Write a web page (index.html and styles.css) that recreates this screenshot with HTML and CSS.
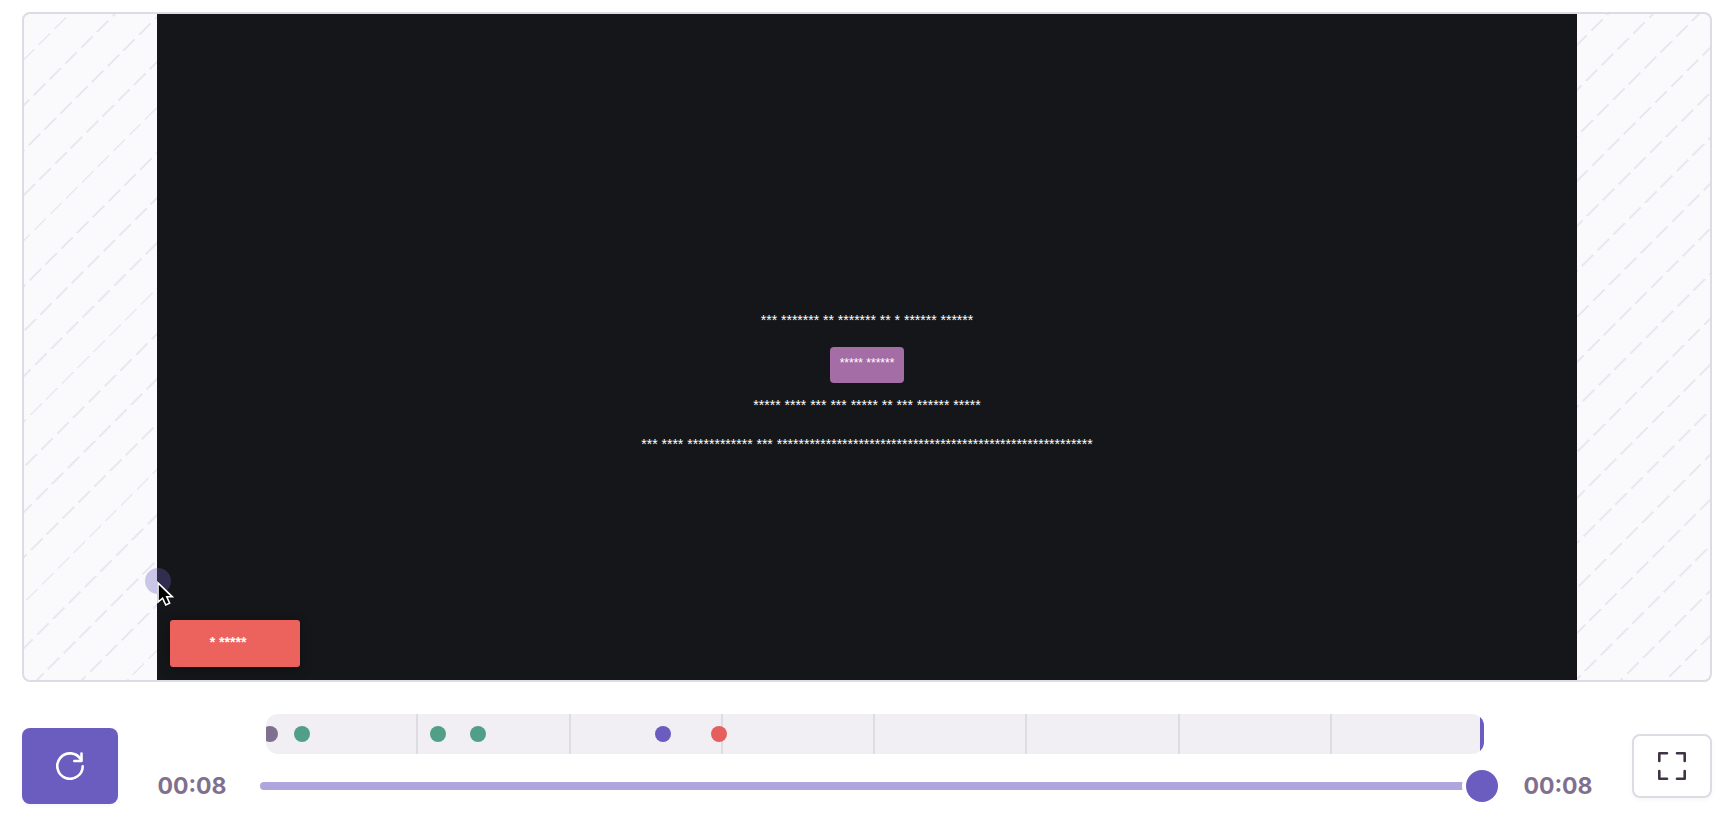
FILE: index.html
```html
<!DOCTYPE html>
<html lang="en">
<head>
<meta charset="utf-8">
<meta name="viewport" content="width=device-width, initial-scale=1">
<title>Session replay</title>
<link rel="stylesheet" href="styles.css">
</head>
<body>
<main class="replay">
  <section class="player" aria-label="Replay">
    <div class="stage">
      <div class="stage-content">
        <p class="line">*** ******* ** ******* ** * ****** ******</p>
        <button type="button" class="stage-button">***** ******</button>
        <p class="line line-follow">***** **** *** *** ***** ** *** ****** *****</p>
        <p class="line">*** **** ************ *** **********************************************************</p>
      </div>
      <button type="button" class="toast">* *****</button>
      <div class="pointer">
        <svg class="pointer-arrow" viewBox="0 0 18 26" aria-hidden="true">
          <path d="M2 2V21L6.600 17.200L9.800 24L13.600 22.200L10.800 15.800H16.300Z" fill="#000" stroke="#fff" stroke-width="1.600"/>
        </svg>
      </div>
    </div>
  </section>

  <div class="controls">
    <button type="button" class="restart" aria-label="Restart replay">
      <svg class="icon" viewBox="0 0 28 28" fill="none" stroke="currentColor" stroke-width="2.600" stroke-linecap="round" stroke-linejoin="round" aria-hidden="true">
        <path d="M26.700 14.200A12.700 12.700 0 1 1 25 7.700"/>
        <path d="M25.500 1.500V9H18.300"/>
      </svg>
    </button>
    <div class="scrubber">
      <div class="timeline">
        <span class="tick"></span><span class="tick"></span><span class="tick"></span><span class="tick"></span><span class="tick"></span><span class="tick"></span><span class="tick"></span><span class="tick"></span>
        <span class="event event-gray" style="left:0.33%"></span>
        <span class="event event-green" style="left:2.96%"></span>
        <span class="event event-green" style="left:14.12%"></span>
        <span class="event event-green" style="left:17.41%"></span>
        <span class="event event-purple" style="left:32.6%"></span>
        <span class="event event-red" style="left:37.2%"></span>
        <span class="playhead"></span>
      </div>
      <time class="time">00:08</time>
      <input class="seek" type="range" min="0" max="8" value="8" aria-label="Seek">
      <time class="time">00:08</time>
    </div>
    <button type="button" class="fullscreen" aria-label="Fullscreen">
      <svg class="icon" viewBox="0 0 28 28" fill="none" stroke="currentColor" stroke-width="2.600" stroke-linecap="round" stroke-linejoin="round" aria-hidden="true">
        <path d="M1.300 9V1.300H9M19 1.300H26.700V9M26.700 19V26.700H19M9 26.700H1.300V19"/>
      </svg>
    </button>
  </div>
</main>
</body>
</html>
```

FILE: styles.css
```css
* {
  box-sizing: border-box;
}

body {
  margin: 0;
  background: #fff;
  font-family: Inter, "Liberation Sans", sans-serif;
}

button {
  border: 0;
  cursor: pointer;
}

.replay {
  display: flex;
  flex-direction: column;
  gap: 32px;
  min-height: 100vh;
  padding: 12px 16px 3px 22px;
}

.player {
  flex: 1;
  display: flex;
  justify-content: center;
  overflow: hidden;
  border: 2px solid #dddbe3;
  border-radius: 8px;
  background-color: #fafafc;
  background-image:
    repeating-linear-gradient(-145deg, transparent, transparent 16px, #fafafc 16px, #fafafc 22px),
    repeating-linear-gradient(-45deg, transparent, transparent 30px, #ebe9f0 30px, #ebe9f0 32px);
}

.stage {
  position: relative;
  width: 84.25%;
  background: #151619;
  font-family: "Liberation Sans", Arial, sans-serif;
  color: #fff;
}

.stage-content {
  display: flex;
  flex-direction: column;
  align-items: center;
  padding-top: 298px;
}

.line {
  margin: 0 0 23px;
  font-size: 14px;
  line-height: 16px;
  white-space: nowrap;
}

.line-follow {
  margin-top: 14px;
}

.stage-button {
  height: 36px;
  margin-top: -4px;
  padding: 0 10px 4px;
  border-radius: 4px;
  background: #a56da5;
  font-family: inherit;
  font-size: 12px;
  color: inherit;
}

.toast {
  position: absolute;
  left: 13px;
  bottom: 13px;
  width: 130px;
  height: 47px;
  padding: 0 40px 4px;
  border-radius: 3px;
  background: #ec625d;
  box-shadow: 0 2px 12px rgba(0, 0, 0, 0.3);
  font-family: inherit;
  font-size: 14px;
  font-weight: 700;
  text-align: left;
  color: inherit;
}

.pointer {
  position: absolute;
  left: -12px;
  top: 554px;
  width: 26px;
  height: 26px;
  border-radius: 50%;
  background: rgba(106, 93, 191, 0.33);
}

.pointer-arrow {
  position: absolute;
  left: 11px;
  top: 13px;
  width: 18px;
  height: 26px;
}

.controls {
  display: flex;
  align-items: center;
}

.restart,
.fullscreen {
  display: grid;
  place-items: center;
  flex: none;
  border-radius: 8px;
}

.restart {
  width: 96px;
  height: 76px;
  background: #6a5dbf;
  box-shadow: 0 2px 4px rgba(43, 34, 51, 0.04);
  color: #fff;
}

.fullscreen {
  width: 80px;
  height: 64px;
  border: 2px solid #dddbe3;
  background: #fff;
  box-shadow: 0 2px 4px rgba(43, 34, 51, 0.04);
  color: #3e3446;
}

.icon {
  width: 28px;
  height: 28px;
}

.scrubber {
  flex: 1;
  display: grid;
  grid-template-columns: 72px 1fr 72px;
  grid-template-rows: 40px 32px;
  row-gap: 16px;
  align-items: center;
  margin: 0 38px;
  padding-bottom: 16px;
}

.timeline {
  position: relative;
  grid-column: 2;
  display: grid;
  grid-template-columns: repeat(8, 1fr);
  height: 40px;
  margin: 0 38px;
  overflow: hidden;
  border-radius: 12px;
  background: #f1eff4;
}

.tick {
  border-right: 2px solid #dddbe3;
}

.event {
  position: absolute;
  top: 12px;
  width: 16px;
  height: 16px;
  margin-left: -8px;
  border-radius: 50%;
}

.event-gray {
  background: #80708f;
}

.event-green {
  background: #529f87;
}

.event-purple {
  background: #6a5dbf;
}

.event-red {
  background: #e55f5f;
}

.playhead {
  position: absolute;
  top: 0;
  right: 0;
  width: 4px;
  height: 100%;
  background: #6a5dbf;
}

.time {
  grid-row: 2;
  font-size: 23px;
  font-weight: 700;
  line-height: 32px;
  text-align: center;
  color: #80708f;
}

.seek {
  grid-row: 2;
  appearance: none;
  height: 32px;
  margin: 0 24px 0 32px;
  background: transparent;
  cursor: pointer;
}

.seek::-webkit-slider-runnable-track {
  height: 8px;
  border-radius: 4px;
  background: #aea6dc;
}

.seek::-webkit-slider-thumb {
  appearance: none;
  width: 32px;
  height: 32px;
  margin-top: -12px;
  border-radius: 50%;
  background: #6a5dbf;
  box-shadow: 0 0 0 4px #fff;
}
```
